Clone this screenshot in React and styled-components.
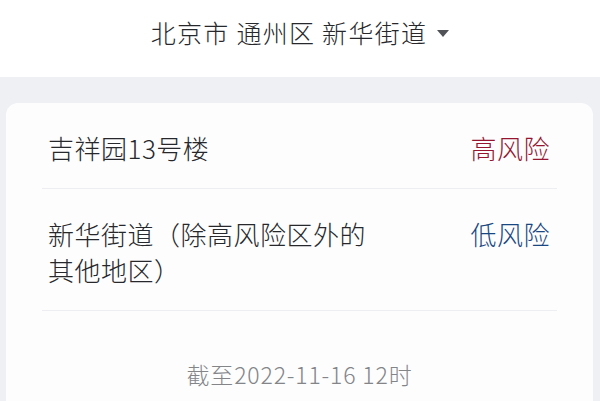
import styled, { createGlobalStyle } from "styled-components";

const GlobalStyle = createGlobalStyle`
  html, body {
    margin: 0;
    padding: 0;
    background: #eef0f4;
    font-family: "Noto Sans CJK SC", "Noto Sans", sans-serif;
  }
`;

const Page = styled.main`
  width: 600px;
  height: 401px;
  overflow: hidden;
  background: #eef0f4;
  font-weight: 300;
`;

const Header = styled.header`
  height: 77px;
  background: #ffffff;
  display: flex;
  justify-content: center;
  padding-top: 14px;
  box-sizing: border-box;
`;

const AreaPicker = styled.div`
  display: flex;
  align-items: center;
  gap: 10px;
  height: 36px;
  font-size: 25px;
  color: #26282c;
  letter-spacing: 1.3px;
`;

const Caret = styled.span`
  width: 0;
  height: 0;
  border-left: 6px solid transparent;
  border-right: 6px solid transparent;
  border-top: 7px solid #505257;
  margin-top: 2px;
`;

const Card = styled.section`
  margin: 26px 7px 0 6px;
  background: #fdfdfe;
  border-radius: 12px;
  padding: 0 36px;
  height: 320px;
`;

const Row = styled.div`
  display: flex;
  justify-content: space-between;
  align-items: flex-start;
  padding: 27px 7px 22px 6px;
  border-bottom: 1px solid #eceef1;
  line-height: 36px;
  font-size: 26px;
  letter-spacing: 0.5px;
`;

const Place = styled.div`
  color: #26282c;
  max-width: 322px;
`;

const Level = styled.div`
  color: ${(p) => (p.$high ? "#961530" : "#184782")};
  flex-shrink: 0;
`;

const Footer = styled.div`
  text-align: center;
  margin-top: 47px;
  font-size: 23px;
  letter-spacing: 0.85px;
  line-height: 32px;
  color: #838589;
`;

const rows = [
  { place: "吉祥园13号楼", level: "高风险", high: true },
  { place: "新华街道（除高风险区外的其他地区）", level: "低风险", high: false },
];

export default function App() {
  return (
    <Page>
      <GlobalStyle />
      <Header>
        <AreaPicker>
          <span>北京市 通州区 新华街道</span>
          <Caret />
        </AreaPicker>
      </Header>
      <Card>
        {rows.map((r) => (
          <Row key={r.place}>
            <Place>{r.place}</Place>
            <Level $high={r.high}>{r.level}</Level>
          </Row>
        ))}
        <Footer>截至2022-11-16 12时</Footer>
      </Card>
    </Page>
  );
}
